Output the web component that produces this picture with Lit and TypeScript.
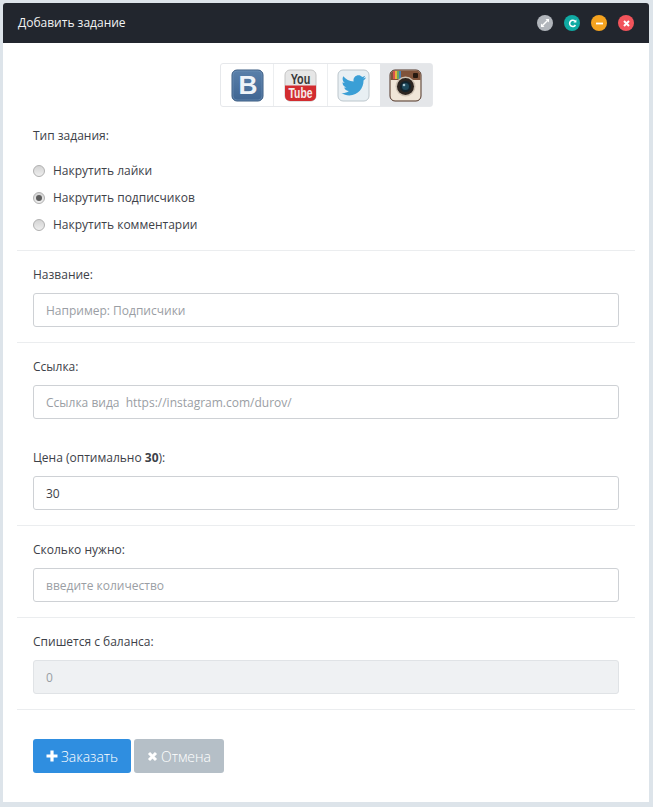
import { LitElement, html, css, svg } from "lit";
import { customElement } from "lit/decorators.js";

const vk = svg`<svg width="33" height="33" viewBox="0 0 33 33">
  <defs><linearGradient id="v" x1="0" y1="0" x2="0" y2="1"><stop offset="0" stop-color="#5a80aa"/><stop offset="1" stop-color="#3f6592"/></linearGradient></defs>
  <rect x="1" y="1" width="31" height="31" rx="5" fill="url(#v)" stroke="#395a80"/>
  <rect x="2" y="2" width="29" height="29" rx="4" fill="none" stroke="#7497bc" stroke-opacity=".55"/>
  <text transform="translate(17 25) scale(1.05 1)" text-anchor="middle" font-family="Liberation Sans" font-weight="700" font-size="25" fill="#eef3f8">B</text>
</svg>`;

const yt = svg`<svg width="33" height="33" viewBox="0 0 33 33">
  <rect x="1" y="1" width="31" height="31" rx="5" fill="#e6e6e6" stroke="#c4c4c4"/>
  <path d="M1 16.500 H32 V27 a5 5 0 0 1 -5 5 H6 a5 5 0 0 1 -5 -5 Z" fill="#d22c30"/>
  <text transform="translate(16.500 14.500) scale(.72 1)" text-anchor="middle" font-family="Liberation Sans" font-weight="700" font-size="15" fill="#3a3a3a">You</text>
  <text transform="translate(16.500 29) scale(.74 1)" text-anchor="middle" font-family="Liberation Sans" font-weight="700" font-size="14" fill="#f6e9e9">Tube</text>
</svg>`;

const tw = svg`<svg width="33" height="33" viewBox="0 0 33 33">
  <rect x="1" y="1" width="31" height="31" rx="5" fill="#e8eff3" stroke="#bcc6cc"/>
  <path d="M29 8.600c-1 .5-1.900.7-2.900.8 1-.6 1.800-1.500 2.200-2.700-1 .6-2 1-3.200 1.200-.9-1-2.200-1.600-3.600-1.600-2.800 0-5 2.300-5 5 0 .4 0 .8.100 1.100-4.200-.2-7.900-2.200-10.300-5.200-.4.700-.7 1.600-.7 2.500 0 1.700.9 3.300 2.200 4.200-.8 0-1.600-.2-2.300-.6v.1c0 2.400 1.700 4.500 4 5-.4.100-.9.200-1.300.2-.3 0-.6 0-1-.1.600 2 2.500 3.500 4.700 3.500-1.700 1.400-3.900 2.200-6.200 2.200-.4 0-.8 0-1.200-.1 2.200 1.400 4.900 2.300 7.700 2.300 9.300 0 14.300-7.700 14.300-14.300v-.7c1-.7 1.800-1.600 2.500-2.600z" fill="#3a9fd6"/>
</svg>`;

const ig = svg`<svg width="33" height="33" viewBox="0 0 33 33">
  <rect x="1" y="1" width="31" height="31" rx="5" fill="#f0e6d8" stroke="#4f3325"/>
  <path d="M1.500 11 V6 a4.500 4.500 0 0 1 4.500 -4.500 H27 a4.500 4.500 0 0 1 4.500 4.500 V11 H23 a9 9 0 0 0 -13 0 Z" fill="#80533a"/>
  <rect x="4" y="2" width="2" height="8" fill="#d9534f"/>
  <rect x="6" y="2" width="2" height="8" fill="#e8b23a"/>
  <rect x="8" y="2" width="2" height="8" fill="#6ea95a"/>
  <rect x="10" y="2" width="2" height="8" fill="#4a7fb5"/>
  <rect x="24" y="4" width="5" height="5" rx="1" fill="#26190f"/>
  <circle cx="16.500" cy="17.500" r="10" fill="#cfc3b4"/>
  <circle cx="16.500" cy="17.500" r="8.500" fill="#2c2520"/>
  <circle cx="16.500" cy="17.500" r="5.500" fill="#12242d"/>
  <circle cx="16.500" cy="17.500" r="3.500" fill="#1f4a5c"/>
  <circle cx="15" cy="16" r="1.300" fill="#a9c7d2"/>
</svg>`;

const expand = svg`<svg width="10" height="10" viewBox="0 0 10 10"><path d="M2.500 7.500 L7.500 2.500" stroke="#fff" stroke-width="1.500"/><path d="M5.500 1 H9 V4.500 Z M1 5.500 V9 H4.500 Z" fill="#fff"/></svg>`;
const refresh = svg`<svg width="9" height="9" viewBox="0 0 9 9"><path d="M7 2.300 A3.100 3.100 0 1 0 7.400 6" fill="none" stroke="#fff" stroke-width="1.600"/><path d="M5.400 3.400 H8.400 V.5 Z" fill="#fff"/></svg>`;
const minus = svg`<svg width="9" height="9" viewBox="0 0 9 9"><rect x="1" y="3.600" width="7" height="1.800" fill="#fff"/></svg>`;
const close = svg`<svg width="9" height="9" viewBox="0 0 9 9"><path d="M2 2 L7 7 M7 2 L2 7" stroke="#fff" stroke-width="2"/></svg>`;
const plus = svg`<svg width="12" height="12" viewBox="0 0 12 12"><path d="M6 .5 V11.500 M.5 6 H11.500" stroke="#fff" stroke-width="3.200"/></svg>`;
const cross = svg`<svg width="11" height="11" viewBox="0 0 11 11"><path d="M2 2 L9 9 M9 2 L2 9" stroke="#fff" stroke-width="3"/></svg>`;

@customElement("app-root")
export class AppRoot extends LitElement {
  static styles = css`
    :host {
      display: block;
      box-sizing: border-box;
      height: 807px;
      padding: 3px 4px 5px 3px;
      background: #dde4ea;
      font-family: "Open Sans", "Noto Sans", sans-serif;
      font-size: 12px;
      color: #3d4148;
    }
    * { box-sizing: border-box; }
    .card {
      height: 799px;
      background: #fff;
      display: flex;
      flex-direction: column;
      border-radius: 3px 3px 0 0;
      overflow: hidden;
    }
    .head {
      height: 40px;
      flex: none;
      background: #22262e;
      color: #f2f3f4;
      display: flex;
      align-items: center;
      justify-content: space-between;
      padding: 0 15px 0 15px;
    }
    .title { font-size: 12px; margin-top: -1px; }
    .ctrls { display: flex; gap: 11px; }
    .ctrl {
      width: 16px;
      height: 16px;
      border-radius: 50%;
      display: flex;
      align-items: center;
      justify-content: center;
    }
    .c1 { background: #b1b5bb; }
    .c2 { background: #10aaa3; }
    .c3 { background: #f5a31f; }
    .c4 { background: #f2545b; }
    .body { padding: 20px 14px 0; display: flex; flex-direction: column; }
    .tabs {
      align-self: center;
      display: flex;
      height: 44px;
      width: 213px;
      border: 1px solid #e6e8eb;
      border-radius: 3px;
      margin-left: 1px;
    }
    .tab {
      width: 53px;
      flex: 1;
      display: flex;
      align-items: center;
      justify-content: center;
      border-left: 1px solid #eceef0;
    }
    .tab:first-child { border-left: 0; }
    .tab.on { background: #e4e6e9; border-left: 0; }
    .sec {
      padding: 0 16px 15px;
      border-bottom: 1px solid #ebedef;
      display: flex;
      flex-direction: column;
    }
    .first { padding-top: 21px; padding-bottom: 16px; }
    .lbl {
      display: block;
      line-height: 16px;
      margin-bottom: 10px;
    }
    .field { display: block; padding-top: 16px; }
    .field + .field { padding-top: 31px; }
    .first .lbl { margin-bottom: 16px; }
    .radios { display: flex; flex-direction: column; gap: 7px; }
    .radio { display: flex; align-items: center; gap: 8px; height: 20px; }
    .dot {
      width: 12px;
      height: 12px;
      margin-top: 1px;
      border-radius: 50%;
      border: 1px solid #b0b0b0;
      background: linear-gradient(#d4d4d4, #eeeeee);
      display: flex;
      align-items: center;
      justify-content: center;
    }
    .dot.on::after {
      content: "";
      width: 6px;
      height: 6px;
      border-radius: 50%;
      background: #5c5c5c;
    }
    .input {
      height: 34px;
      border: 1px solid #ced1d5;
      border-radius: 3px;
      padding: 0 12px;
      display: flex;
      align-items: center;
      white-space: pre;
      background: #fff;
      color: #3d4148;
    }
    .ph { color: #9a9ea4; }
    .dis { background: #eff1f3; border-color: #e0e3e6; color: #9a9ea4; }
    .actions { display: flex; gap: 3px; padding: 29px 16px 0; }
    .btn {
      height: 34px;
      border-radius: 3px;
      display: flex;
      align-items: center;
      justify-content: center;
      gap: 3px;
      color: #fff;
      font-family: "Open Sans", "Noto Sans", sans-serif;
      font-weight: 300;
      font-size: 14px;
    }
    .blue { width: 98px; background: #2f8ee0; }
    .grey { width: 90px; background: #b5bfc7; }
    b { font-weight: 700; }
  `;

  render() {
    return html`
      <div class="card">
        <div class="head">
          <span class="title">Добавить задание</span>
          <div class="ctrls">
            <span class="ctrl c1">${expand}</span>
            <span class="ctrl c2">${refresh}</span>
            <span class="ctrl c3">${minus}</span>
            <span class="ctrl c4">${close}</span>
          </div>
        </div>
        <div class="body">
          <div class="tabs">
            <div class="tab">${vk}</div>
            <div class="tab">${yt}</div>
            <div class="tab">${tw}</div>
            <div class="tab on">${ig}</div>
          </div>
          <div class="sec first">
            <span class="lbl">Тип задания:</span>
            <div class="radios">
              <div class="radio"><span class="dot"></span>Накрутить лайки</div>
              <div class="radio"><span class="dot on"></span>Накрутить подписчиков</div>
              <div class="radio"><span class="dot"></span>Накрутить комментарии</div>
            </div>
          </div>
          <div class="sec">
            <div class="field">
              <span class="lbl">Название:</span>
              <div class="input ph">Например: Подписчики</div>
            </div>
          </div>
          <div class="sec">
            <div class="field">
              <span class="lbl">Ссылка:</span>
              <div class="input ph">Ссылка вида  https://instagram.com/durov/</div>
            </div>
            <div class="field">
              <span class="lbl">Цена (оптимально <b>30</b>):</span>
              <div class="input">30</div>
            </div>
          </div>
          <div class="sec">
            <div class="field">
              <span class="lbl">Сколько нужно:</span>
              <div class="input ph">введите количество</div>
            </div>
          </div>
          <div class="sec">
            <div class="field">
              <span class="lbl">Спишется с баланса:</span>
              <div class="input dis">0</div>
            </div>
          </div>
          <div class="actions">
            <div class="btn blue">${plus}Заказать</div>
            <div class="btn grey">${cross}Отмена</div>
          </div>
        </div>
      </div>
    `;
  }
}
